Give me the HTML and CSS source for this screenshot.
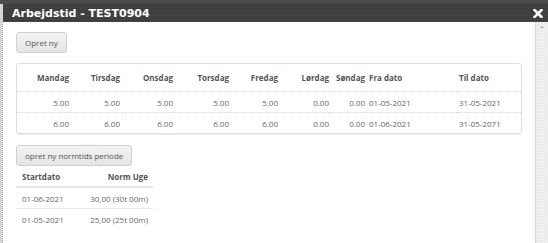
FILE: index.html
```html
<!DOCTYPE html>
<html lang="da">
<head>
    <meta charset="UTF-8">
    <meta name="viewport" content="width=device-width, initial-scale=1.0">
    <title>Arbejdstid</title>
    <link rel="stylesheet" href="styles.css">
</head>
<body>

<div class="dialog">
    <div class="titlebar">
        <span class="title">Arbejdstid - TEST0904</span>
        <span class="close">
            <svg width="10" height="9" viewBox="0 0 10 9">
                <path d="M1.5 1 L8.5 8 M8.5 1 L1.5 8" stroke="#fff" stroke-width="2.6" stroke-linecap="square"/>
            </svg>
        </span>
    </div>

    <div class="dialog-body">
        <div class="content">
            <button class="btn">Opret ny</button>

            <!-- arbejdstid pr. ugedag -->
            <div class="card">
                <table class="week-table">
                    <colgroup>
                        <col style="width:54px">
                        <col style="width:51px">
                        <col style="width:53px">
                        <col style="width:56px">
                        <col style="width:49px">
                        <col style="width:51px">
                        <col style="width:36px">
                        <col style="width:90px">
                        <col>
                    </colgroup>
                    <thead>
                        <tr>
                            <th class="num">Mandag</th>
                            <th class="num">Tirsdag</th>
                            <th class="num">Onsdag</th>
                            <th class="num">Torsdag</th>
                            <th class="num">Fredag</th>
                            <th class="num">Lørdag</th>
                            <th class="num">Søndag</th>
                            <th>Fra dato</th>
                            <th>Til dato</th>
                        </tr>
                    </thead>
                    <tbody>
                        <tr>
                            <td class="num">5.00</td>
                            <td class="num">5.00</td>
                            <td class="num">5.00</td>
                            <td class="num">5.00</td>
                            <td class="num">5.00</td>
                            <td class="num">0.00</td>
                            <td class="num">0.00</td>
                            <td>01-05-2021</td>
                            <td>31-05-2021</td>
                        </tr>
                        <tr>
                            <td class="num">6.00</td>
                            <td class="num">6.00</td>
                            <td class="num">6.00</td>
                            <td class="num">6.00</td>
                            <td class="num">6.00</td>
                            <td class="num">0.00</td>
                            <td class="num">0.00</td>
                            <td>01-06-2021</td>
                            <td>31-05-2071</td>
                        </tr>
                    </tbody>
                </table>
            </div>

            <button class="btn">opret ny normtids periode</button>

            <!-- normtid perioder -->
            <table class="norm-table">
                <thead>
                    <tr>
                        <th>Startdato</th>
                        <th class="num">Norm Uge</th>
                    </tr>
                </thead>
                <tbody>
                    <tr>
                        <td>01-06-2021</td>
                        <td class="num">30,00 (30t 00m)</td>
                    </tr>
                    <tr>
                        <td>01-05-2021</td>
                        <td class="num">25,00 (25t 00m)</td>
                    </tr>
                </tbody>
            </table>
        </div>

        <div class="scrollbar">
            <span class="arrow"></span>
        </div>
    </div>
</div>

</body>
</html>
```

FILE: styles.css
```css
body {
    margin: 0;
    padding: 0;
    background-color: #fff;
    font-family: "Open Sans", "Liberation Sans", sans-serif;
    font-size: 8px;
    color: #666;
}

.dialog {
    height: 243px;
    display: flex;
    flex-direction: column;
    background-color: #d6d6d6;
    border-top: 4px solid #4a4a4a;
    overflow: hidden;
}

.titlebar {
    height: 18px;
    margin-left: 3px;
    display: flex;
    align-items: center;
    justify-content: space-between;
    padding-left: 9px;
    background: repeating-linear-gradient(to bottom, #3a3a3a 0, #3a3a3a 1px, #454545 1px, #454545 2px);
    color: #fff;
}

.title {
    font-family: "DejaVu Sans", Verdana, sans-serif;
    font-weight: bold;
    font-size: 11px;
}

.close {
    display: flex;
    margin-right: 5px;
}

.dialog-body {
    flex: 1;
    display: flex;
    margin-left: 2px;
    background-color: #fff;
    border-left: 1px dotted #9a9a9a;
}

.content {
    flex: 1;
    padding: 10px 0 0 13px;
}

.btn {
    display: block;
    height: 21px;
    padding: 0 8px;
    font-family: "Open Sans", "Liberation Sans", sans-serif;
    font-size: 8px;
    color: #555;
    background: linear-gradient(#f4f4f4, #e4e4e4);
    border: 1px solid #d0d0d0;
    border-radius: 3px;
    cursor: pointer;
}

.card {
    width: 504px;
    margin: 10px 0 11px;
    border: 1px solid #dedede;
    border-radius: 3px;
    box-shadow: 0 1px 1px rgba(0, 0, 0, 0.08);
}

table {
    border-collapse: collapse;
}

.week-table {
    width: 100%;
    table-layout: fixed;
}

.week-table th,
.week-table td {
    padding: 0 2px;
    text-align: left;
    white-space: nowrap;
}

.week-table th {
    height: 27px;
    color: #555;
}

.week-table td {
    height: 20px;
    border-top: 1px dotted #d8d8d8;
}

.num {
    text-align: right !important;
}

.norm-table {
    width: 137px;
}

.norm-table th,
.norm-table td {
    padding: 0 5px 0 6px;
    text-align: left;
    white-space: nowrap;
}

.norm-table th {
    height: 20px;
    color: #555;
    border-bottom: 2px solid #e6e6e6;
}

.norm-table td {
    height: 20px;
}

.norm-table tbody tr:first-child td {
    border-bottom: 1px solid #e6e6e6;
}

/* rullebjælke */
.scrollbar {
    width: 12px;
    border-left: 1px dotted #c8c8c8;
    background-color: #ececec;
    background-image: radial-gradient(circle, #fafafa 0.8px, transparent 1px);
    background-size: 3px 3px;
    position: relative;
}

.arrow {
    position: absolute;
    top: 4px;
    left: 4px;
    width: 0;
    height: 0;
    border-left: 2px solid transparent;
    border-right: 2px solid transparent;
    border-bottom: 2px solid #aaa;
}
```
